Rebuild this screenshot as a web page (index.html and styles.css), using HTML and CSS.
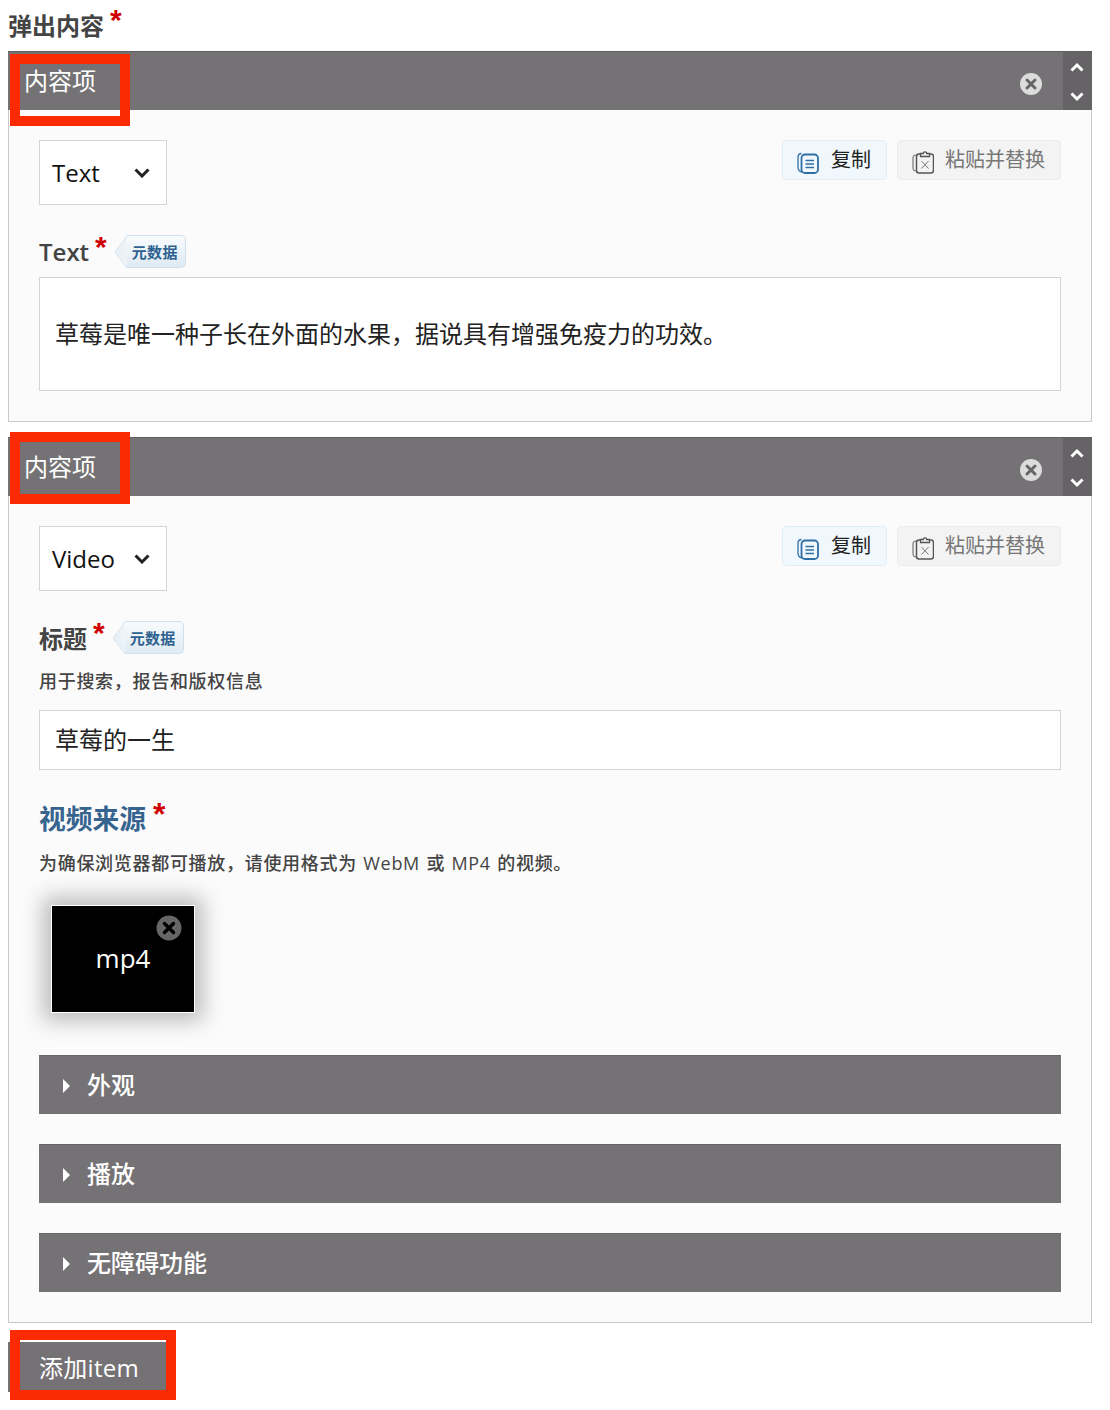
FILE: index.html
```html
<!DOCTYPE html>
<html lang="zh">
<head>
<meta charset="utf-8">
<title>弹出内容</title>
<link rel="stylesheet" href="styles.css">
</head>
<body>
<div class="page">
  <div class="main-label">弹出内容<span class="star">*</span></div>

  <section class="item item-one">
    <header class="item-head">
      <span class="item-title">内容项</span>
      <span class="remove"><svg viewBox="0 0 22 22" width="22" height="22"><circle cx="11" cy="11" r="11" fill="#dcdcdc"/><path d="M7 7l8 8M15 7l-8 8" stroke="#666" stroke-width="3" stroke-linecap="round"/></svg></span>
      <span class="order">
        <svg viewBox="0 0 14 10" width="14" height="10"><path d="M1.500 8.500L7 3l5.500 5.500" fill="none" stroke="#fff" stroke-width="3"/></svg>
        <svg viewBox="0 0 14 10" width="14" height="10"><path d="M1.500 1.500L7 7l5.500-5.500" fill="none" stroke="#fff" stroke-width="3"/></svg>
      </span>
    </header>
    <div class="item-body">
      <div class="tool-row">
        <div class="select"><span>Text</span><svg viewBox="0 0 16 10" width="16" height="10"><path d="M1.500 1.500L8 8l6.500-6.500" fill="none" stroke="#222" stroke-width="3"/></svg></div>
        <div class="tools">
          <span class="btn btn-copy"><svg viewBox="0 0 22 24" width="22" height="24"><path d="M4.500 3.500C2 3.500 1 5 1 7v10c0 3 2 5 5 5" fill="none" stroke="#2f6fa5" stroke-width="1.300"/><rect x="4.500" y="4.500" width="16.500" height="18.500" rx="3.500" fill="none" stroke="#2f6fa5" stroke-width="1.800"/><path d="M8.500 10.500h8.500M8.500 14h8.500M8.500 17.500h8.500" stroke="#2f6fa5" stroke-width="1.500"/></svg>复制</span>
          <span class="btn btn-paste"><svg viewBox="0 0 22 24" width="22" height="24"><path d="M4 5C1.500 5 1 6.500 1 8.500v9C1 20 2 21 4 21" fill="none" stroke="#777" stroke-width="1.200"/><rect x="4.500" y="4" width="17" height="19" rx="2.500" fill="none" stroke="#555" stroke-width="1.500"/><path d="M8.500 6.500h9V3.500h-2.800a1.700 1.700 0 0 0-3.400 0H8.500z" fill="#f3f3f3" stroke="#555" stroke-width="1.300"/><path d="M9.500 11l7 7.500M16.500 11l-7 7.500" stroke="#777" stroke-width="1"/></svg>粘贴并替换</span>
        </div>
      </div>
      <div class="field-label text-label">Text<span class="star">*</span><span class="meta">元数据</span></div>
      <div class="textarea">草莓是唯一种子长在外面的水果，据说具有增强免疫力的功效。</div>
    </div>
    <i class="mark mark-item"></i>
  </section>

  <section class="item item-two">
    <header class="item-head">
      <span class="item-title">内容项</span>
      <span class="remove"><svg viewBox="0 0 22 22" width="22" height="22"><circle cx="11" cy="11" r="11" fill="#dcdcdc"/><path d="M7 7l8 8M15 7l-8 8" stroke="#666" stroke-width="3" stroke-linecap="round"/></svg></span>
      <span class="order">
        <svg viewBox="0 0 14 10" width="14" height="10"><path d="M1.500 8.500L7 3l5.500 5.500" fill="none" stroke="#fff" stroke-width="3"/></svg>
        <svg viewBox="0 0 14 10" width="14" height="10"><path d="M1.500 1.500L7 7l5.500-5.500" fill="none" stroke="#fff" stroke-width="3"/></svg>
      </span>
    </header>
    <div class="item-body">
      <div class="tool-row">
        <div class="select"><span>Video</span><svg viewBox="0 0 16 10" width="16" height="10"><path d="M1.500 1.500L8 8l6.500-6.500" fill="none" stroke="#222" stroke-width="3"/></svg></div>
        <div class="tools">
          <span class="btn btn-copy"><svg viewBox="0 0 22 24" width="22" height="24"><path d="M4.500 3.500C2 3.500 1 5 1 7v10c0 3 2 5 5 5" fill="none" stroke="#2f6fa5" stroke-width="1.300"/><rect x="4.500" y="4.500" width="16.500" height="18.500" rx="3.500" fill="none" stroke="#2f6fa5" stroke-width="1.800"/><path d="M8.500 10.500h8.500M8.500 14h8.500M8.500 17.500h8.500" stroke="#2f6fa5" stroke-width="1.500"/></svg>复制</span>
          <span class="btn btn-paste"><svg viewBox="0 0 22 24" width="22" height="24"><path d="M4 5C1.500 5 1 6.500 1 8.500v9C1 20 2 21 4 21" fill="none" stroke="#777" stroke-width="1.200"/><rect x="4.500" y="4" width="17" height="19" rx="2.500" fill="none" stroke="#555" stroke-width="1.500"/><path d="M8.500 6.500h9V3.500h-2.800a1.700 1.700 0 0 0-3.400 0H8.500z" fill="#f3f3f3" stroke="#555" stroke-width="1.300"/><path d="M9.500 11l7 7.500M16.500 11l-7 7.500" stroke="#777" stroke-width="1"/></svg>粘贴并替换</span>
        </div>
      </div>
      <div class="field-label title-label">标题<span class="star">*</span><span class="meta">元数据</span></div>
      <div class="help help-title">用于搜索，报告和版权信息</div>
      <div class="input">草莓的一生</div>
      <div class="source-label">视频来源<span class="star">*</span></div>
      <div class="help help-source">为确保浏览器都可播放，请使用格式为 WebM 或 MP4 的视频。</div>
      <div class="thumb"><span class="thumb-text">mp4</span><span class="thumb-x"><svg viewBox="0 0 26 26" width="26" height="26"><circle cx="13" cy="13" r="12.500" fill="#666"/><path d="M8.500 8.500l9 9M17.500 8.500l-9 9" stroke="#000" stroke-width="3.400" stroke-linecap="round"/></svg></span></div>
      <div class="group group-first"><span class="tri"></span><span class="group-text">外观</span></div>
      <div class="group"><span class="tri"></span><span class="group-text">播放</span></div>
      <div class="group"><span class="tri"></span><span class="group-text">无障碍功能</span></div>
    </div>
    <i class="mark mark-item"></i>
  </section>

  <div class="add-wrap">
    <span class="add-btn">添加item</span>
    <i class="mark mark-add"></i>
  </div>
</div>
</body>
</html>
```
FILE: styles.css
```css
* { box-sizing: border-box; }
html, body { margin: 0; background: #fff; }
body {
  padding: 8px;
  font-family: "Open Sans", "Noto Sans CJK SC", sans-serif;
  color: #222;
}
.page { width: 1084px; }
.star {
  color: #d00000;
  font-family: "Liberation Sans", sans-serif;
  font-size: 30px;
  font-weight: 700;
  line-height: 1;
  margin-left: 6px;
  display: inline-block;
  transform: translateY(-5px);
}
.main-label {
  height: 43px;
  font-size: 24px;
  font-weight: 600;
  line-height: 36px;
  color: #444;
}
.item {
  position: relative;
  background: #fbfbfb;
  border: 1px solid #c9c9c9;
  border-top: 0;
}
.item-one { height: 371px; }
.item-two { margin-top: 15px; height: 886px; }
.item-head {
  margin: 0 -1px;
  height: 59px;
  background: #757275;
  border-top: 1px solid #5f5d5f;
  display: flex;
  align-items: center;
  color: #fff;
}
.item-title {
  font-size: 24px;
  line-height: 1;
  margin-left: 16px;
  flex: 1;
}
.remove { display: flex; margin-right: 21px; transform: translateY(3px); }
.order {
  width: 29px;
  align-self: stretch;
  background: #656365;
  display: flex;
  flex-direction: column;
  justify-content: space-between;
  align-items: center;
  padding: 10px 1px 8px 0;
}
.item-body { padding: 30px 30px 0; }
.tool-row { display: flex; justify-content: space-between; align-items: flex-start; }
.select {
  width: 128px;
  height: 65px;
  background: #fff;
  border: 1px solid #d4d4d4;
  display: flex;
  align-items: center;
  justify-content: space-between;
  padding: 0 16px 0 12px;
  font-size: 24px;
  color: #111;
}
.tools { display: flex; gap: 10px; }
.btn {
  height: 40px;
  border-radius: 4px;
  display: flex;
  align-items: center;
  font-size: 20px;
  line-height: 1;
  padding: 0 0 0 14px;
  gap: 11px;
  white-space: nowrap;
}
.btn svg { flex: none; transform: translateY(2px); }
.btn-copy { width: 105px; gap: 12px; background: #f0f8fd; border: 1px solid #e2eef5; color: #222; }
.btn-paste { width: 164px; background: #f3f3f3; border: 1px solid #ececec; color: #777; }
.field-label {
  display: flex;
  align-items: center;
  font-size: 24px;
  font-weight: 600;
  color: #444;
  height: 34px;
}
.text-label { margin-top: 29px; }
.title-label { margin-top: 29px; }
.field-label .star { margin-left: 6px; transform: translateY(-4px); }
.meta {
  position: relative;
  margin-left: 20px;
  height: 33px;
  padding: 0 7px 0 5px;
  display: flex;
  align-items: center;
  font-size: 15px;
  letter-spacing: .3px;
  font-weight: 600;
  color: #2f6190;
  background: linear-gradient(#f7fbfd, #dfeaf3);
  border: 1px solid #cfdfeb;
  border-left: 0;
  border-radius: 0 5px 5px 0;
}
.meta::before {
  content: "";
  position: absolute;
  left: -11.500px;
  top: 4px;
  width: 23px;
  height: 23px;
  background: linear-gradient(45deg, #e6eef5, #f7fbfd);
  border-left: 1px solid #cfdfeb;
  border-bottom: 1px solid #cfdfeb;
  transform: scaleX(.75) rotate(45deg);
  clip-path: polygon(0 0, 100% 100%, 0 100%);
}
.textarea {
  margin-top: 9px;
  height: 114px;
  background: #fff;
  border: 1px solid #d4d4d4;
  padding: 0 15px 3px;
  display: flex;
  align-items: center;
  font-size: 24px;
  color: #222;
}
.help {
  font-size: 18px;
  letter-spacing: .7px;
  word-spacing: 1px;
  line-height: 27px;
  font-weight: 500;
  color: #444;
}
.help-title { margin-top: 14px; }
.input {
  margin-top: 15px;
  height: 60px;
  background: #fff;
  border: 1px solid #d4d4d4;
  padding: 0 15px 4px;
  display: flex;
  align-items: center;
  font-size: 24px;
}
.source-label {
  margin-top: 29px;
  height: 40px;
  font-size: 26.750px;
  font-weight: 700;
  line-height: 40px;
  color: #36648f;
}
.source-label .star { margin-left: 7px; font-size: 32px; transform: translateY(-4px); }
.help-source { margin-top: 11px; }
.thumb {
  position: relative;
  margin: 28px 0 0 12px;
  width: 144px;
  height: 108px;
  background: #000;
  border: 1px solid #fff;
  box-shadow: 0 0 20px 8px rgba(0,0,0,.25);
  color: #fff;
  font-size: 26px;
  display: flex;
  align-items: center;
  justify-content: center;
}
.thumb-text { transform: translateY(-1px); }
.thumb-x { position: absolute; top: 9px; right: 12px; display: flex; }
.group {
  margin-top: 30px;
  height: 59px;
  background: #757275;
  border-top: 1px solid #666;
  color: #fff;
  font-size: 24px;
  font-weight: 500;
  display: flex;
  align-items: center;
  padding-left: 24px;
}
.group-first { margin-top: 42px; }
.group-text { transform: translateY(-2px); }
.tri {
  width: 0;
  height: 0;
  border-left: 7px solid #fff;
  border-top: 7px solid transparent;
  border-bottom: 7px solid transparent;
  margin-right: 17px;
  transform: translateY(1px);
}
.add-wrap { position: relative; height: 70px; }
.add-btn {
  position: absolute;
  left: 0;
  top: 19px;
  width: 158px;
  height: 50px;
  background: #757275;
  color: #fff;
  font-size: 24px;
  letter-spacing: .3px;
  display: flex;
  align-items: center;
  padding: 0 0 2px 31px;
}
.mark { position: absolute; display: block; border: 10px solid #fb2a00; }
.mark-item { left: 1px; top: 3px; width: 120px; height: 72px; }
.item-two .mark-item { top: -5px; }
.mark-add { left: 2px; top: 7px; width: 166px; height: 70px; }
```
